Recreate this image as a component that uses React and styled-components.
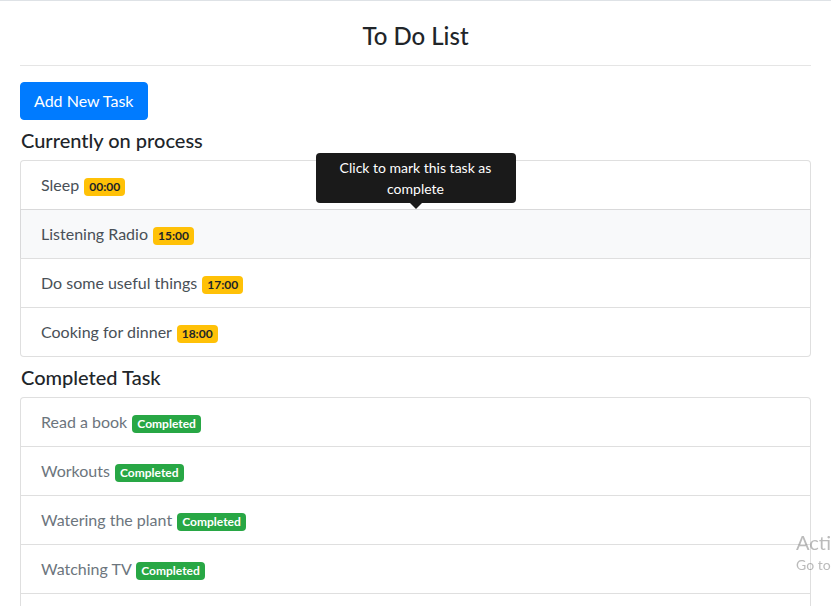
import React from 'react';
import styled, { createGlobalStyle } from 'styled-components';

const GlobalStyle = createGlobalStyle`
  html, body {
    margin: 0;
    padding: 0;
    overflow-x: hidden;
  }
  body {
    font-family: "Segoe UI", Lato, "Noto Sans", sans-serif;
    font-size: 16px;
    line-height: 1.5;
    color: #212529;
    background: #fff;
    border-top: 1px solid #dee2e6;
  }
`;

const processTasks = [
  { id: 1, name: 'Sleep', time: '00:00' },
  { id: 2, name: 'Listening Radio', time: '15:00', hover: true },
  { id: 3, name: 'Do some useful things', time: '17:00' },
  { id: 4, name: 'Cooking for dinner', time: '18:00' },
];

const doneTasks = [
  { id: 5, name: 'Read a book' },
  { id: 6, name: 'Workouts' },
  { id: 7, name: 'Watering the plant' },
  { id: 8, name: 'Watching TV' },
  { id: 9, name: 'Playing games' },
];

const App = () => {
  return (
    <>
      <GlobalStyle />
      <Container>
        <Title>To Do List</Title>
        <Divider />
        <AddButton>Add New Task</AddButton>

        <SectionTitle>Currently on process</SectionTitle>
        <ListGroup>
          {processTasks.map((t) => (
            <ListItem key={t.id} $hover={t.hover}>
              {t.name} <Badge>{t.time}</Badge>
              {t.hover && <Tooltip>Click to mark this task as complete</Tooltip>}
            </ListItem>
          ))}
        </ListGroup>

        <SectionTitle>Completed Task</SectionTitle>
        <ListGroup>
          {doneTasks.map((t) => (
            <ListItem key={t.id} $done>
              {t.name} <Badge $success>Completed</Badge>
            </ListItem>
          ))}
        </ListGroup>
      </Container>

      <Watermark>
        <WatermarkTitle>Activate Windows</WatermarkTitle>
        <WatermarkText>Go to Settings to activate Windows.</WatermarkText>
      </Watermark>
    </>
  );
};

export default App;

const Container = styled.div`
  padding: 21px 20px 40px;
`;

const Title = styled.h3`
  margin: 0;
  text-align: center;
  font-size: 24px;
  font-weight: 500;
  line-height: 1.2;
`;

const Divider = styled.hr`
  margin: 14px 0 16px;
  border: 0;
  border-top: 1px solid #e5e5e5;
`;

const AddButton = styled.button`
  display: inline-block;
  font-family: inherit;
  font-size: 16px;
  line-height: 1.5;
  padding: 6px 13px;
  color: #fff;
  background: #007bff;
  border: 1px solid #007bff;
  border-radius: 4px;
  cursor: pointer;
`;

const SectionTitle = styled.h5`
  margin: 8px 0 8px 1px;
  font-size: 20px;
  font-weight: 500;
  line-height: 1.2;
`;

const ListGroup = styled.ul`
  margin: 0;
  padding: 0;
  list-style: none;
  border-radius: 4px;
`;

const ListItem = styled.li`
  position: relative;
  padding: 12px 20px;
  margin-bottom: -1px;
  border: 1px solid rgba(0, 0, 0, 0.125);
  background: ${(p) => (p.$hover ? '#f8f9fa' : '#fff')};
  color: ${(p) => (p.$done ? '#6c757d' : '#495057')};
  cursor: pointer;

  &:first-child {
    border-top-left-radius: 4px;
    border-top-right-radius: 4px;
  }
  &:last-child {
    margin-bottom: 0;
    border-bottom-left-radius: 4px;
    border-bottom-right-radius: 4px;
  }
`;

const Badge = styled.span`
  display: inline-block;
  margin-left: 1px;
  padding: 3px 5px;
  font-size: 12px;
  font-weight: 700;
  line-height: 1;
  text-align: center;
  white-space: nowrap;
  vertical-align: baseline;
  border-radius: 4px;
  color: ${(p) => (p.$success ? '#fff' : '#212529')};
  background: ${(p) => (p.$success ? '#28a745' : '#ffc107')};
`;

const Tooltip = styled.div`
  position: absolute;
  bottom: calc(100% + 7px);
  left: 50%;
  transform: translateX(-50%);
  width: 200px;
  box-sizing: border-box;
  padding: 4px 8px;
  font-size: 14px;
  line-height: 1.5;
  text-align: center;
  color: #fff;
  background: #1a1a1a;
  border-radius: 4px;
  z-index: 10;

  &::after {
    content: '';
    position: absolute;
    top: 100%;
    left: 50%;
    margin-left: -6px;
    border-width: 6px 6px 0;
    border-style: solid;
    border-color: #1a1a1a transparent transparent;
  }
`;

const Watermark = styled.div`
  position: fixed;
  left: 796px;
  top: 528px;
  white-space: nowrap;
  color: rgba(120, 120, 120, 0.5);
  pointer-events: none;
`;

const WatermarkTitle = styled.div`
  font-size: 20px;
  line-height: 28px;
`;

const WatermarkText = styled.div`
  font-size: 14px;
  line-height: 18px;
`;
